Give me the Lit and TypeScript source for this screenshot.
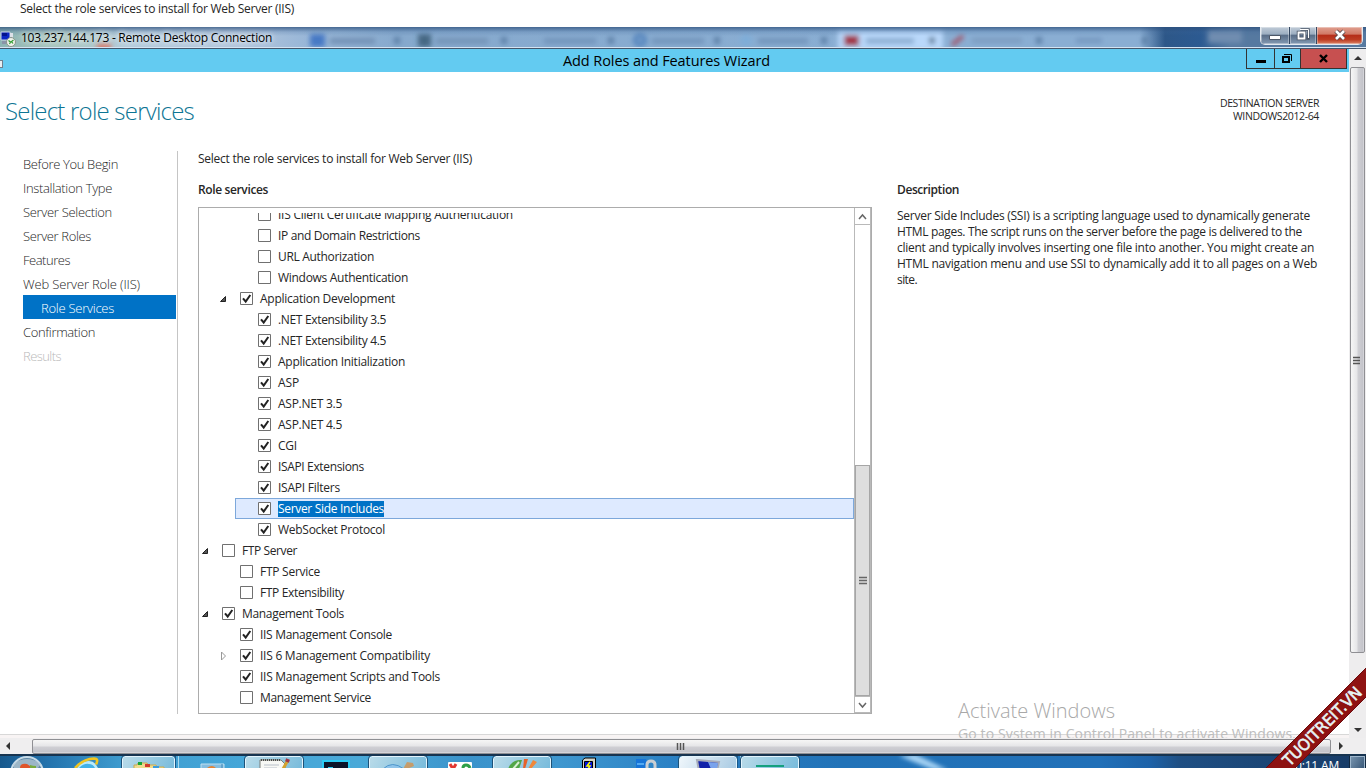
import { LitElement, html, svg, css, nothing } from "lit";
import { customElement, property } from "lit/decorators.js";
import { classMap } from "lit/directives/class-map.js";

interface TreeItem {
  label: string;
  width: number;
  depth: number;
  checked?: boolean;
  selected?: boolean;
  arrow?: "open" | "closed";
}

const TREE: TreeItem[] = [
  { label: "IIS Client Certificate Mapping Authentication", width: 235, depth: 2 },
  { label: "IP and Domain Restrictions", width: 142, depth: 2 },
  { label: "URL Authorization", width: 96, depth: 2 },
  { label: "Windows Authentication", width: 130, depth: 2 },
  { label: "Application Development", width: 135, depth: 1, checked: true, arrow: "open" },
  { label: ".NET Extensibility 3.5", width: 108, depth: 2, checked: true },
  { label: ".NET Extensibility 4.5", width: 108, depth: 2, checked: true },
  { label: "Application Initialization", width: 127, depth: 2, checked: true },
  { label: "ASP", width: 21, depth: 2, checked: true },
  { label: "ASP.NET 3.5", width: 64, depth: 2, checked: true },
  { label: "ASP.NET 4.5", width: 64, depth: 2, checked: true },
  { label: "CGI", width: 19, depth: 2, checked: true },
  { label: "ISAPI Extensions", width: 86, depth: 2, checked: true },
  { label: "ISAPI Filters", width: 62, depth: 2, checked: true },
  { label: "Server Side Includes", width: 106, depth: 2, checked: true, selected: true },
  { label: "WebSocket Protocol", width: 107, depth: 2, checked: true },
  { label: "FTP Server", width: 55, depth: 0, arrow: "open" },
  { label: "FTP Service", width: 60, depth: 1 },
  { label: "FTP Extensibility", width: 84, depth: 1 },
  { label: "Management Tools", width: 102, depth: 0, checked: true, arrow: "open" },
  { label: "IIS Management Console", width: 132, depth: 1, checked: true },
  { label: "IIS 6 Management Compatibility", width: 170, depth: 1, checked: true, arrow: "closed" },
  { label: "IIS Management Scripts and Tools", width: 180, depth: 1, checked: true },
  { label: "Management Service", width: 111, depth: 1 },
];

const STEPS = [
  { label: "Before You Begin", width: 95 },
  { label: "Installation Type", width: 89 },
  { label: "Server Selection", width: 89 },
  { label: "Server Roles", width: 68 },
  { label: "Features", width: 47 },
  { label: "Web Server Role (IIS)", width: 117 },
  { label: "Role Services", width: 73, current: true },
  { label: "Confirmation", width: 72 },
  { label: "Results", width: 38, disabled: true },
];

const DESCRIPTION = [
  { text: "Server Side Includes (SSI) is a scripting language used to dynamically generate", width: 413 },
  { text: "HTML pages. The script runs on the server before the page is delivered to the", width: 405 },
  { text: "client and typically involves inserting one file into another. You might create an", width: 417 },
  { text: "HTML navigation menu and use SSI to dynamically add it to all pages on a Web", width: 420 },
  { text: "site.", width: 20 },
];

/** A single line of text, spaced out to fill a given width. */
@customElement("fit-text")
export class FitText extends LitElement {
  @property() text = "";
  @property({ type: Number }) width = 0;

  static styles = css`
    :host {
      display: inline-block;
      white-space: pre;
    }
  `;

  firstUpdated() {
    const natural = this.getBoundingClientRect().width;
    const spacing = (this.width - natural) / this.text.length;
    this.style.letterSpacing = `${spacing.toFixed(3)}px`;
  }

  render() {
    return html`${this.text}`;
  }
}

const fit = (text: string, width: number) =>
  html`<fit-text .text=${text} .width=${width}></fit-text>`;

@customElement("rdp-titlebar")
export class RdpTitlebar extends LitElement {
  static styles = css`
    :host {
      display: flex;
      position: relative;
      height: 21px;
      overflow: hidden;
      background: linear-gradient(90deg, #8eb5b4 0, #a9c6bd 60px, #b4cbdc 130px, #b3c6dc 240px, #9bb8d8 300px, #86a9cd 400px, #8aaed3 860px, #8aaed3 1140px, #2d5788 1165px, #2c5a91 1200px, #5679a0 1230px, #5679a0 1366px);
      border-bottom: 1px solid #45576b;
      font: 12px "Open Sans", sans-serif;
      color: #000;
    }
    .backdrop {
      position: absolute;
      inset: 0;
    }
    .shade {
      position: absolute;
      inset: 0;
      background: linear-gradient(rgba(45, 80, 125, 0.75), rgba(60, 100, 150, 0.2) 5px, transparent 9px);
      border-bottom: 1px solid #d5e4f3;
    }
    .title {
      display: flex;
      flex: 1;
      position: relative;
      gap: 5px;
      line-height: 20px;
      text-shadow: 0 0 5px #fff, 0 0 7px rgba(255, 255, 255, 0.7);
    }
    .title fit-text {
      margin-top: 1px;
    }
    .title svg {
      margin-top: 4px;
    }
    .buttons {
      display: flex;
      position: relative;
      width: 103px;
      height: 18px;
      margin-right: 3px;
      box-sizing: border-box;
      border: 1px solid #e3e9ef;
      border-top: 0;
      border-radius: 0 0 5px 5px;
      overflow: hidden;
      background: #33465f;
      gap: 1px;
    }
    .button {
      display: flex;
      align-items: center;
      justify-content: center;
      width: 26px;
      padding-bottom: 2px;
      box-sizing: border-box;
      background: linear-gradient(#c0cbd7, #9caec1 42%, #596d87 48%, #8299b2);
      box-shadow: inset 0 0 0 1px rgba(255, 255, 255, 0.35);
    }
    .first {
      width: 28px;
    }
    .close {
      flex: 1;
      background: linear-gradient(#e0a090, #d17865 42%, #b52d18 48%, #bd3d23 75%, #db8466);
    }
  `;

  render() {
    return html`
      <svg class="backdrop" width="1366" height="21">
        <defs>
          <filter id="soft" x="-20%" y="-100%" width="140%" height="300%">
            <feGaussianBlur stdDeviation="2.6" />
          </filter>
        </defs>
        <g filter="url(#soft)">
          <rect x="838" y="3" width="105" height="20" fill="#b9d8fa" />
          <rect x="97" y="17" width="14" height="6" fill="#da715f" />
          <rect x="310" y="7" width="15" height="13" fill="#4779c5" />
          <rect x="330" y="11" width="45" height="6" fill="#7392b6" />
          <rect x="394" y="10" width="6" height="7" fill="#5d80a7" />
          <rect x="418" y="7" width="13" height="13" fill="#456783" />
          <rect x="436" y="11" width="52" height="6" fill="#7594b8" />
          <rect x="501" y="10" width="6" height="7" fill="#5d80a7" />
          <rect x="544" y="11" width="52" height="6" fill="#7395bc" />
          <rect x="608" y="10" width="6" height="7" fill="#5d80a7" />
          <circle cx="640" cy="13" r="7" fill="#5585bd" />
          <circle cx="640" cy="13" r="2" fill="#8fb4da" />
          <rect x="652" y="11" width="52" height="6" fill="#7395bc" />
          <rect x="714" y="10" width="6" height="7" fill="#5d80a7" />
          <circle cx="746" cy="13" r="6" fill="#7fadd8" />
          <rect x="758" y="11" width="50" height="6" fill="#7395bc" />
          <rect x="821" y="10" width="6" height="7" fill="#5d80a7" />
          <rect x="844" y="8" width="15" height="11" fill="#a23645" />
          <rect x="866" y="11" width="48" height="6" fill="#8badd2" />
          <rect x="929" y="10" width="6" height="7" fill="#64809d" />
          <path d="M952 18 963 9" stroke="#a34f63" stroke-width="4" />
          <rect x="972" y="11" width="50" height="5" fill="#7c9cc0" />
          <rect x="1036" y="10" width="6" height="7" fill="#5d80a7" />
          <rect x="1076" y="11" width="26" height="5" fill="#7597bf" />
          <rect x="1142" y="10" width="6" height="7" fill="#5d80a7" />
          <rect x="1208" y="2" width="34" height="14" fill="#6f8db0" />
        </g>
      </svg>
      <div class="shade"></div>
      <div class="title">
        <svg width="16" height="16">
          <path d="M1 1h9v8H1z" fill="#0b25c4" stroke="#c6cee0" />
          <path d="M2 2h5v3H2z" fill="#03128d" />
          <path d="M10 2h3v7h-3z" fill="#dde1e8" />
          <path d="M2 10h6v3H2z" fill="#8a94a8" />
          <circle cx="11" cy="11" r="4.5" fill="#eef1ec" stroke="#8a948a" />
          <path d="m8.500 9.500 2 1.500-1 2M13.500 9l-2 1.500 1.500 2" fill="none" stroke="#2f9d2f" stroke-width="1.200" />
        </svg>
        ${fit("103.237.144.173 - Remote Desktop Connection", 251)}
      </div>
      <div class="buttons">
        <div class="button first">
          <svg width="14" height="12">
            <path d="M1.500 6.500h11v4h-11z" fill="#fff" stroke="#4c5767" />
          </svg>
        </div>
        <div class="button">
          <svg width="14" height="13">
            <path d="M4.500 1.500h8v9h-2" fill="none" stroke="#4c5767" stroke-width="2.500" />
            <path d="M4 1.500h8.500V10" fill="none" stroke="#fff" />
            <path d="M2.500 4.500h6v6h-6z" fill="none" stroke="#4c5767" stroke-width="3.500" />
            <path d="M2.500 4.500h6v6h-6z" fill="none" stroke="#fff" stroke-width="1.800" />
          </svg>
        </div>
        <div class="button close">
          <svg width="14" height="12">
            <path d="m3 2 8 8m0-8-8 8" stroke="#58494c" stroke-width="4.500" />
            <path d="m3 2 8 8m0-8-8 8" stroke="#fff" stroke-width="2.600" />
          </svg>
        </div>
      </div>
    `;
  }
}

@customElement("role-tree")
export class RoleTree extends LitElement {
  static styles = css`
    :host {
      display: flex;
      box-sizing: border-box;
      width: 674px;
      height: 507px;
      border: 1px solid #acacac;
      font: 12px "Open Sans", sans-serif;
      color: #262626;
    }
    .rows {
      flex: 1;
      margin-top: 5px;
      overflow: hidden;
    }
    .rows > .row:first-child {
      margin-top: -9px;
    }
    .indent-1 {
      margin-left: 18px;
    }
    .indent-2 {
      margin-left: 36px;
    }
    .row {
      display: flex;
      align-items: center;
      box-sizing: border-box;
      height: 21px;
      line-height: 16px;
      border: 1px solid transparent;
    }
    .row.selected {
      border-color: #7da8db;
      background: #deeaff;
    }
    .selected fit-text {
      background: #0072c6;
      color: #fff;
    }
    .arrow {
      width: 22px;
      height: 13px;
    }
    .check {
      width: 13px;
      height: 13px;
      margin-right: 7px;
    }
    .scrollbar {
      display: flex;
      flex-direction: column;
      width: 15px;
      border: 1px solid #b9b9b9;
      border-top: 0;
    }
    .end {
      height: 16px;
      border-bottom: 1px solid #b9b9b9;
    }
    .track {
      flex: 1;
    }
    .thumb {
      display: flex;
      align-items: center;
      justify-content: center;
      box-sizing: border-box;
      height: 231px;
      border: 1px solid #a6a6a6;
      background: #dedede;
    }
    .end.down {
      height: 15px;
      border-bottom: 0;
      border-top: 1px solid #b9b9b9;
    }
  `;

  renderArrow(kind?: string) {
    return html`<svg class="arrow">
      ${kind === "open"
        ? svg`<path d="M7.500 4.500v5h-5z" fill="#555" stroke="#222" />`
        : kind === "closed"
          ? svg`<path d="M3.500 3v8l4-4z" fill="#fff" stroke="#999" />`
          : nothing}
    </svg>`;
  }

  renderRow(item: TreeItem) {
    const classes = {
      row: true,
      selected: !!item.selected,
      "indent-1": item.depth === 1,
      "indent-2": item.depth === 2,
    };
    return html`
      <div class=${classMap(classes)}>
        ${this.renderArrow(item.arrow)}
        <svg class="check">
          <path d="M.5.5h12v12H.5z" fill="#fff" stroke="#707070" />
          ${item.checked
            ? svg`<path d="m3 6.300 2.700 3.200L10.300 3" fill="none" stroke="#222" stroke-width="2" />`
            : nothing}
        </svg>
        ${fit(item.label, item.width)}
      </div>
    `;
  }

  render() {
    return html`
      <div class="rows">${TREE.map((item) => this.renderRow(item))}</div>
      <div class="scrollbar">
        <div class="end">
          <svg width="15" height="16"><path d="m4 11 3.500-4 3.500 4" fill="none" stroke="#666" stroke-width="1.500" /></svg>
        </div>
        <div class="track"></div>
        <div class="thumb">
          <svg width="8" height="9"><path d="M0 1.500h8M0 4.500h8M0 7.500h8" stroke="#666" stroke-width="1.600" /></svg>
        </div>
        <div class="end down">
          <svg width="15" height="15"><path d="m4 6 3.500 4L11 6" fill="none" stroke="#666" stroke-width="1.500" /></svg>
        </div>
      </div>
    `;
  }
}

@customElement("wizard-window")
export class WizardWindow extends LitElement {
  static styles = css`
    :host {
      display: flex;
      flex-direction: column;
      position: relative;
      overflow: hidden;
      background: #fff;
      font: 12px "Open Sans", sans-serif;
      color: #262626;
    }
    .caption {
      display: flex;
      flex: none;
      height: 23px;
      background: #63cbf1;
      color: #000;
    }
    .stub {
      width: 2px;
      height: 6px;
      margin-top: 11px;
      border: 1px solid #6f7f8c;
      border-left: 0;
      background: #e8eef2;
    }
    .caption fit-text {
      margin-left: 560px;
      font-size: 14.5px;
      line-height: 23px;
    }
    .controls {
      display: flex;
      box-sizing: border-box;
      width: 101px;
      height: 20px;
      margin: 0 2px 0 auto;
      border: 1px solid #333;
      border-top: 0;
    }
    .control {
      display: flex;
      align-items: center;
      justify-content: center;
      width: 27px;
      border-right: 1px solid #333;
    }
    .restore {
      width: 25px;
    }
    .close {
      flex: 1;
      border: 0;
      background: #c75050;
    }
    .head {
      display: flex;
      justify-content: space-between;
      height: 79px;
      padding: 0 30px 0 5px;
    }
    .head h1 {
      margin: 22px 0 0;
      font-size: 24px;
      font-weight: 300;
      line-height: 34px;
      color: #0d7594;
    }
    .server {
      display: flex;
      flex-direction: column;
      align-items: flex-end;
      margin-top: 25px;
      font-size: 10.5px;
      line-height: 13px;
    }
    .content {
      display: flex;
      height: 563px;
    }
    .steps {
      width: 153px;
      padding: 0 1px 0 23px;
      border-right: 1px solid #c5c5c5;
      font-size: 13px;
      font-weight: 300;
    }
    .step {
      height: 24px;
      line-height: 27px;
    }
    .current {
      padding-left: 18px;
      background: #0072c6;
      color: #fff;
    }
    .disabled {
      color: #b9b9b9;
    }
    .main {
      width: 674px;
      margin-left: 20px;
    }
    .main > fit-text {
      display: block;
      width: max-content;
      line-height: 16px;
    }
    h2 {
      margin: 15px 0 9px;
      font-size: 12px;
      font-weight: 600;
      line-height: 16px;
    }
    .side {
      margin-left: 25px;
    }
    .side h2 {
      margin: 31px 0 10px;
    }
    .line {
      height: 16px;
      line-height: 16px;
    }
    .edge {
      height: 3px;
      margin-top: auto;
      border-top: 1px solid #d8d8d8;
      background: #f8f4f4;
    }
    .activate {
      position: absolute;
      left: 958px;
      top: 649px;
      color: #bdbdbd;
    }
    .activate .big {
      font-size: 20px;
      font-weight: 300;
      line-height: 26px;
      color: #a8a8a8;
    }
    .activate .small {
      font-size: 14px;
      line-height: 20px;
    }
  `;

  render() {
    return html`
      <div class="caption">
        <div class="stub"></div>
        ${fit("Add Roles and Features Wizard", 207)}
        <div class="controls">
          <div class="control">
            <svg width="10" height="12"><path d="M0 7h10v3H0z" /></svg>
          </div>
          <div class="control restore">
            <svg width="11" height="12">
              <path d="M2 1.500h7.500V8" fill="none" stroke="#000" />
              <path d="M1 4h6v5H1z" fill="none" stroke="#000" stroke-width="2" />
            </svg>
          </div>
          <div class="control close">
            <svg width="9" height="9"><path d="m1 1 7 7m0-7-7 7" stroke="#000" stroke-width="2.400" /></svg>
          </div>
        </div>
      </div>
      <div class="head">
        <h1>${fit("Select role services", 189)}</h1>
        <div class="server">
          ${fit("DESTINATION SERVER", 99)}
          ${fit("WINDOWS2012-64", 86)}
        </div>
      </div>
      <div class="content">
        <div class="steps">
          ${STEPS.map(
            (s) => html`<div class=${classMap({ step: true, current: !!s.current, disabled: !!s.disabled })}>
              ${fit(s.label, s.width)}
            </div>`
          )}
        </div>
        <div class="main">
          ${fit("Select the role services to install for Web Server (IIS)", 274)}
          <h2>${fit("Role services", 70)}</h2>
          <role-tree></role-tree>
        </div>
        <div class="side">
          <h2>${fit("Description", 62)}</h2>
          ${DESCRIPTION.map((l) => html`<div class="line">${fit(l.text, l.width)}</div>`)}
        </div>
      </div>
      <div class="edge"></div>
      <div class="activate">
        <div class="big">${fit("Activate Windows", 157)}</div>
        <div class="small">${fit("Go to System in Control Panel to activate Windows.", 338)}</div>
      </div>
    `;
  }
}

@customElement("task-bar")
export class TaskBar extends LitElement {
  static styles = css`
    :host {
      display: flex;
      box-sizing: border-box;
      height: 14px;
      overflow: hidden;
      border-top: 2px solid #173450;
      background: linear-gradient(90deg, #17588c 0, #2474ae 50px, #3f9dd0 125px, #45a6d8 240px, #4aa9d8 360px, #3b93cb 470px, #3f97cf 560px, #2a80c4 680px, #2273b8 840px, #2170b8 1100px, #1d62a8 1150px, #1f4f83 1180px, #173c68 1350px);
      font: 12px "Open Sans", sans-serif;
      color: #fff;
    }
    .slot {
      display: flex;
      justify-content: center;
      box-sizing: border-box;
      height: 30px;
      flex: none;
    }
    .framed {
      border: 1px solid #e2f4fd;
      border-radius: 3px;
      outline: 1px solid #1d5278;
      background: linear-gradient(120deg, #b9dbe9, #6eb6d9);
    }
    .bright {
      background: linear-gradient(120deg, #eff6fb, #9ec4df);
    }
    .clock {
      justify-content: flex-start;
      line-height: 19px;
    }
    .show-desktop {
      width: 15px;
      height: 30px;
      box-sizing: border-box;
      border: 1px solid #9db6cc;
      outline: 1px solid #10273f;
      background: linear-gradient(120deg, #7592ad, #1c3c5e);
    }
    .start { width: 53px; }
    .pinned { width: 69px; padding-right: 4px; }
    .narrow { width: 53px; }
    .app { width: 58px; }
    .plain { width: 66px; }
    .tray-gap { width: 64px; }
    .streak { width: 496px; }
    .clock { width: 55px; }
    .stack {
      width: 4px;
      height: 30px;
      box-sizing: border-box;
      border-left: 1px solid #17598a;
      border-right: 1px solid #a9d8ee;
    }
  `;

  render() {
    return html`
      <div class="slot start">
        <svg width="34" height="12">
          <circle cx="17" cy="17" r="16" fill="#5d87a6" stroke="#c7dbe8" stroke-width="2" />
          <path d="M3 8q14-10 28 0l-3 4H4z" fill="#b8cbd6" opacity=".7" />
          <path d="M10 12q0-5 7-4l3 2v2z" fill="#df552b" />
          <path d="M20 12V9q3 1 6 1v2z" fill="#79ab3d" />
        </svg>
      </div>
      <div class="slot pinned">
        <svg width="30" height="12">
          <path d="M6 12q4-7 12-7 6 0 9 7" fill="#b9eafb" />
          <path d="M8 12q5-5 10-4 4 0 6 4" fill="#41b2e8" />
          <path d="M4 12Q12 3 23 2.500q5 0 2 6" fill="none" stroke="#f1c51f" stroke-width="2.600" />
        </svg>
      </div>
      <div class="slot framed narrow">
        <svg width="32" height="12">
          <path d="M1 12V8h3l1-2h9l1 2h8l1 2h7v2z" fill="#efdc8e" stroke="#c9a950" />
          <path d="M5 5h4v3H5z" fill="#15a735" />
          <path d="M12 7h5v3h-5z" fill="#d23c2f" />
          <path d="M20 9h6v3h-6z" fill="#3a9cdf" />
        </svg>
      </div>
      <div class="stack"></div>
      <div class="slot plain">
        <svg width="28" height="12">
          <path d="M3 12V8h23v4" fill="#84bde0" stroke="#bfe0f0" />
          <path d="M9 12q5-4 9 0" fill="#e28336" />
          <path d="M24 12V8" stroke="#3f87b8" />
        </svg>
      </div>
      <div class="slot framed app">
        <svg width="34" height="12">
          <path d="M3 3h21l4 4v5H3z" fill="#f7f8f5" stroke="#7b7d78" />
          <path d="M4 3h20" stroke="#4b4b48" stroke-width="2" stroke-dasharray="1 1" />
          <path d="M7 8h15M7 11h13" stroke="#b9c0ca" />
          <path d="m31 3-5 9" stroke="#d4a32f" stroke-width="3" />
          <path d="m31 2-1 3" stroke="#a33947" stroke-width="4" />
        </svg>
      </div>
      <div class="slot plain">
        <svg width="28" height="12">
          <path d="M1 14V5h26v9" fill="#0c1529" stroke="#2accf4" stroke-width="2" />
          <path d="M6 11h5v1H6z" fill="#2accf4" />
        </svg>
      </div>
      <div class="slot framed app">
        <svg width="38" height="12">
          <path d="M4 12q9-9 21 0" fill="#8fc4ea" stroke="#4d96cc" />
          <path d="m24 12 4-7 6 1 1 3-7 3" fill="#c69c6a" />
        </svg>
      </div>
      <div class="slot plain">
        <svg width="24" height="12">
          <rect x="0" y="6" width="24" height="10" rx="1" fill="#fff" />
          <path d="m2 8 3 5 3-5" fill="none" stroke="#e23832" stroke-width="3" />
          <path d="M15 12q0-3 3-3t4 3" fill="none" stroke="#2f9f48" stroke-width="3" />
        </svg>
      </div>
      <div class="slot framed app">
        <svg width="34" height="12">
          <path d="M3 12q4-10 14-9l-3 9z" fill="#52a647" />
          <path d="m8 12 6-7" stroke="#d8efd2" stroke-width="2" />
          <path d="m18 12 1-10h4l-3 10z" fill="#e6622a" />
          <path d="m23 12 5-9 4 2-6 7z" fill="#f0883a" />
        </svg>
      </div>
      <div class="slot tray-gap">
        <svg width="14" height="12" style="margin-left: 12px">
          <path d="M.5 14V4L3 2h10.500v12" fill="#d5d5c8" stroke="#000" />
          <path d="M2.500 5.500h8V14h-8z" fill="#0012e0" stroke="#000" />
          <path d="m8 6-3 4h3l-2 3" fill="none" stroke="#ff0" stroke-width="1.500" />
        </svg>
      </div>
      <div class="slot tray-gap">
        <svg width="24" height="12">
          <path d="M1 12V3h10l2 9z" fill="#1674d8" />
          <path d="M12 12V9q0-4 4-4t4 4v3" fill="none" stroke="#c9ced2" stroke-width="3" />
          <path d="M2 8h7" stroke="#51a9f2" stroke-width="2" />
        </svg>
      </div>
      <div class="slot framed bright app">
        <svg width="28" height="12">
          <path d="m3 3 22 2-2 9H5z" fill="#1322a9" stroke="#a7acb9" stroke-width="2" />
          <path d="m14 5 10 1-1 6h-6z" fill="#7aa3ec" />
        </svg>
      </div>
      <div class="stack"></div>
      <div class="slot framed app">
        <svg width="28" height="12">
          <path d="M0 9h28" stroke="#14a07e" stroke-width="2" />
          <path d="M0 11h28v3H0z" fill="#5ed0b4" />
        </svg>
      </div>
      <div class="slot streak">
        <svg width="496" height="12">
          <defs>
            <filter id="glow"><feGaussianBlur stdDeviation="2" /></filter>
          </defs>
          <path d="m100 0 35 14h14L116-2z" fill="#a6d3f4" filter="url(#glow)" />
        </svg>
      </div>
      <div class="slot clock">${fit("0:11 AM", 44)}</div>
      <div class="show-desktop"></div>
    `;
  }
}

@customElement("app-root")
export class AppRoot extends LitElement {
  static styles = css`
    :host {
      display: flex;
      flex-direction: column;
      position: relative;
      width: 1366px;
      height: 768px;
      overflow: hidden;
      background: #fff;
      font: 12px "Open Sans", sans-serif;
      color: #262626;
    }
    .intro {
      height: 27px;
      padding-left: 20px;
      line-height: 18px;
    }
    rdp-titlebar {
      flex: none;
    }
    .session {
      display: flex;
      height: 689px;
    }
    wizard-window {
      width: 1349px;
    }
    .vbar {
      display: flex;
      flex-direction: column;
      align-items: center;
      width: 17px;
      background: #eeedee;
    }
    .vbar .thumb {
      display: flex;
      align-items: center;
      justify-content: center;
      box-sizing: border-box;
      width: 15px;
      height: 586px;
      padding-right: 2px;
      border: 1px solid #8f8f93;
      border-radius: 2px;
      background: linear-gradient(90deg, #f6f6f6, #e6e6e8 45%, #cfcfd4 55%, #c4c4ca 90%, #dedee2);
    }
    .vbar .down {
      margin-top: auto;
    }
    .hbar {
      display: flex;
      flex: none;
      align-items: center;
      height: 16px;
      background: #efeeef;
    }
    .hbar .thumb {
      display: flex;
      align-items: center;
      justify-content: center;
      box-sizing: border-box;
      width: 1299px;
      height: 15px;
      padding-right: 2px;
      border: 1px solid #8f8f93;
      border-radius: 2px;
      background: linear-gradient(#f6f6f6, #e6e6e8 45%, #cfcfd4 55%, #c4c4ca 90%, #dedee2);
    }
    .ribbon {
      position: absolute;
      right: 0;
      bottom: 0;
      font-family: "DejaVu Sans", sans-serif;
    }
  `;

  render() {
    return html`
      <div class="intro">
        ${fit("Select the role services to install for Web Server (IIS)", 274)}
      </div>
      <rdp-titlebar></rdp-titlebar>
      <div class="session">
        <wizard-window></wizard-window>
        <div class="vbar">
          <svg width="17" height="18"><path d="M5 11h8L9 7z" fill="#333" /></svg>
          <div class="thumb">
            <svg width="7" height="9"><path d="M0 1.500h7M0 4.500h7M0 7.500h7" stroke="#555" stroke-width="1.500" /></svg>
          </div>
          <svg class="down" width="17" height="17"><path d="M5 7h8l-4 4z" fill="#333" /></svg>
        </div>
      </div>
      <div class="hbar">
        <svg width="32" height="16"><path d="M10 4v8L6 8z" fill="#333" /></svg>
        <div class="thumb">
          <svg width="9" height="7"><path d="M1.500 0v7M4.500 0v7M7.500 0v7" stroke="#555" stroke-width="1.500" /></svg>
        </div>
        <svg width="20" height="16"><path d="M8 4v8l4-4z" fill="#333" /></svg>
      </div>
      <task-bar></task-bar>
      <svg class="ribbon" width="106" height="106">
        <path d="M6 106 106 6v29l-71 71z" fill="#8e1212" />
        <path d="M6 106 106 6M35 106l71-71" stroke="#6b0a0c" />
        <text
          transform="translate(29.500 105) rotate(-45)"
          textLength="104"
          lengthAdjust="spacingAndGlyphs"
          font-size="16"
          fill="#e6f3f5"
          stroke="#e6f3f5"
          stroke-width=".6"
        >TUOITREIT.VN</text>
      </svg>
    `;
  }
}
